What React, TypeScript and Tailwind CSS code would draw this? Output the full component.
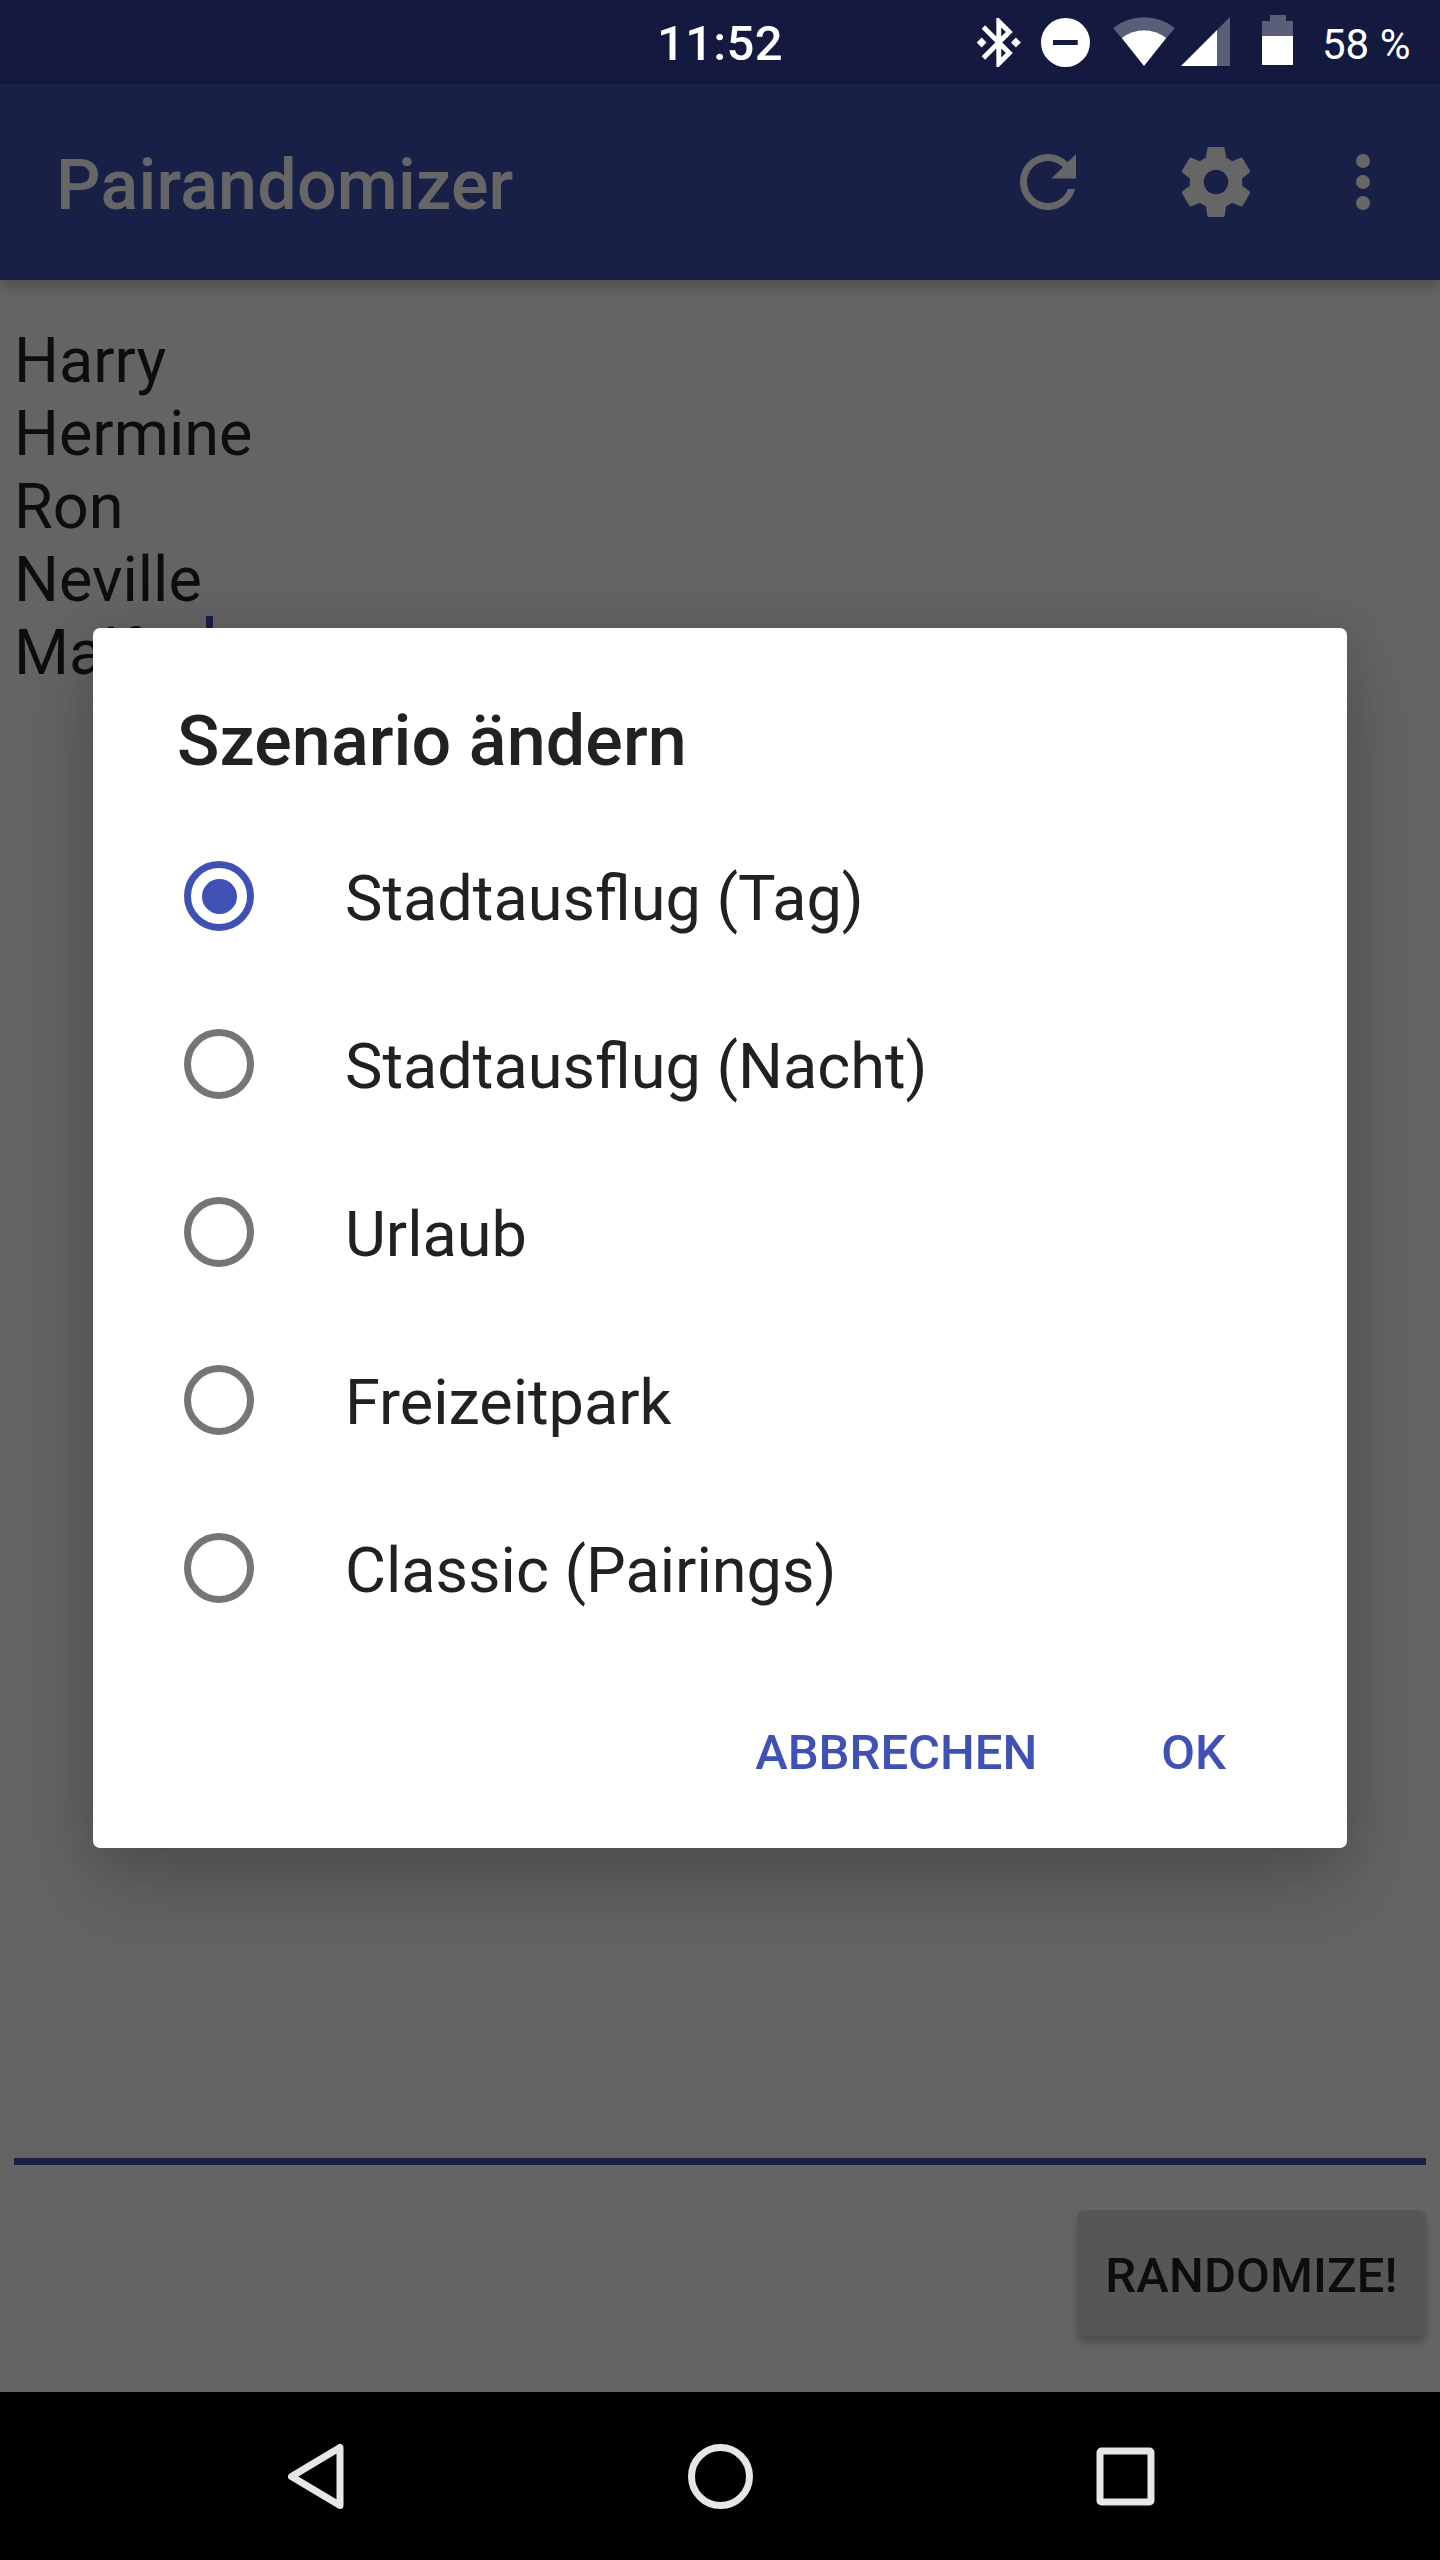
import { useState } from "react";

const names = ["Harry", "Hermine", "Ron", "Neville"];
const scenarios = [
  "Stadtausflug (Tag)",
  "Stadtausflug (Nacht)",
  "Urlaub",
  "Freizeitpark",
  "Classic (Pairings)",
];

function StatusIcons() {
  return (
    <svg width="330" height="84" viewBox="969 0 330 84" fill="#fff" className="shrink-0">
      <path
        transform="translate(969.4 13.1) scale(2.45)"
        d="M7 12l-2-2-2 2 2 2 2-2zm10.71-4.29L12 2h-1v7.59L6.41 5 5 6.41 10.59 12 5 17.59 6.41 19 11 14.41V22h1l5.71-5.71-4.3-4.29 4.3-4.29zM13 5.83l1.88 1.88L13 9.59V5.83zm1.88 10.46L13 18.17v-3.76l1.88 1.88zM19 10l-2 2 2 2 2-2-2-2z"
      />
      <path
        fillRule="evenodd"
        d="M1065.5 18a24.5 24.5 0 1 0 0 49a24.5 24.5 0 1 0 0-49zM1053 40h24.7v4.9H1053z"
      />
      <path opacity=".3" d="M1144 66L1121.7 38Q1132 30.2 1144 30.2T1166.3 38L1175 28Q1161 17.2 1144 17.2T1113 28L1121.7 38z" />
      <path d="M1144 66L1121.7 38Q1132 30.2 1144 30.2T1166.3 38z" />
      <path opacity=".3" d="M1217 66V30L1230 17V66z" />
      <path d="M1181 66L1217 30V66z" />
      <path opacity=".3" d="M1262 36V21h8v-6h16v6h7v15z" />
      <path d="M1262 36h31v29h-31z" />
    </svg>
  );
}

function Radio({ checked }: { checked: boolean }) {
  return (
    <span
      className={
        checked
          ? "flex size-[70px] shrink-0 items-center justify-center rounded-full border-[7px] border-[#3f51b5]"
          : "flex size-[70px] shrink-0 items-center justify-center rounded-full border-[7px] border-[#757575]"
      }
    >
      {checked && <span className="size-[35px] rounded-full bg-[#3f51b5]" />}
    </span>
  );
}

export default function App() {
  const [selected, setSelected] = useState(0);
  return (
    <div className="relative flex h-[2560px] w-[1440px] flex-col overflow-hidden bg-[#fafafa] font-['Roboto',sans-serif]">
      <div className="h-[84px] shrink-0 bg-[#303f9f]" />
      <header className="relative flex h-[196px] shrink-0 items-center bg-[#3f51b5] pr-[35px] pl-[56px] text-white shadow-[0_7px_14px_rgba(0,0,0,0.22)]">
        <h1 className="flex-1 pt-[5px] text-[70px] leading-[84px] font-medium tracking-[0.2px]">
          Pairandomizer
        </h1>
        <div className="flex items-center gap-[84px]">
          <svg width="84" height="84" viewBox="0 0 24 24" fill="currentColor">
            <path d="M17.65 6.35C16.2 4.9 14.21 4 12 4c-4.42 0-7.99 3.58-7.99 8s3.57 8 7.99 8c3.73 0 6.84-2.55 7.73-6h-2.08c-.82 2.33-3.04 4-5.65 4-3.31 0-6-2.69-6-6s2.69-6 6-6c1.66 0 3.14.69 4.22 1.78L13 11h7V4l-2.35 2.35z" />
          </svg>
          <svg width="84" height="84" viewBox="0 0 24 24" fill="currentColor">
            <path d="M19.43 12.98c.04-.32.07-.64.07-.98s-.03-.66-.07-.98l2.11-1.65c.19-.15.24-.42.12-.64l-2-3.46c-.12-.22-.39-.3-.61-.22l-2.49 1c-.52-.4-1.08-.73-1.69-.98l-.38-2.65C14.46 2.18 14.25 2 14 2h-4c-.25 0-.46.18-.49.42l-.38 2.65c-.61.25-1.17.59-1.69.98l-2.49-1c-.23-.09-.49 0-.61.22l-2 3.46c-.13.22-.07.49.12.64l2.11 1.65c-.04.32-.07.65-.07.98s.03.66.07.98l-2.11 1.65c-.19.15-.24.42-.12.64l2 3.46c.12.22.39.3.61.22l2.49-1c.52.4 1.08.73 1.69.98l.38 2.65c.03.24.24.42.49.42h4c.25 0 .46-.18.49-.42l.38-2.65c.61-.25 1.17-.59 1.69-.98l2.49 1c.23.09.49 0 .61-.22l2-3.46c.12-.22.07-.49-.12-.64l-2.11-1.65zM12 15.5c-1.93 0-3.5-1.57-3.5-3.5s1.57-3.5 3.5-3.5 3.5 1.57 3.5 3.5-1.57 3.5-3.5 3.5z" />
          </svg>
        </div>
        <svg width="84" height="84" viewBox="0 0 24 24" fill="currentColor" className="ml-[63px]">
          <circle cx="12" cy="6" r="2" />
          <circle cx="12" cy="12" r="2" />
          <circle cx="12" cy="18" r="2" />
        </svg>
      </header>

      <main className="flex flex-1 flex-col px-[14px] pt-[44px]">
        <div className="h-[1841px] border-b-[7px] border-[#3f51b5] text-[63px] leading-[73px] text-[#212121]">
          {names.map((name) => (
            <p key={name}>{name}</p>
          ))}
          <div className="flex">
            <p>Malfoy</p>
            <span className="h-[73px] w-[7px] bg-[#3f51b5]" />
          </div>
        </div>
        <div className="flex pt-[45px]">
          <button className="ml-auto flex h-[126px] w-[349px] items-center justify-center rounded-[7px] bg-[#d6d7d7] pt-[5px] text-[49px] font-medium tracking-[0.15px] text-[#212121] shadow-[0_7px_7px_rgba(0,0,0,0.22)]">
            RANDOMIZE!
          </button>
        </div>
      </main>

      <div className="h-[168px] shrink-0" />

      {/* Scrim with the modal, status content and system navigation above it */}
      <div className="absolute inset-0 flex flex-col bg-black/60">
        <div className="flex h-[84px] shrink-0 items-center pl-[657px] text-white">
          <span className="w-[312px] pt-[4px] text-[49px] font-medium tracking-[0.3px]">11:52</span>
          <StatusIcons />
          <span className="pt-[4px] pl-[23px] text-[42px] whitespace-nowrap">58 %</span>
        </div>

        <div className="flex flex-1 justify-center pt-[544px]">
          <section className="flex h-[1220px] w-[1254px] flex-col rounded-[7px] bg-white text-[#212121] shadow-[0_40px_80px_rgba(0,0,0,0.2),0_0_44px_rgba(0,0,0,0.1)]">
            <h2 className="pt-[71px] pl-[84px] text-[70px] leading-[84px] font-medium tracking-[0.1px]">
              Szenario ändern
            </h2>
            <div className="pt-[29px]">
              {scenarios.map((label, i) => (
                <button
                  key={label}
                  onClick={() => setSelected(i)}
                  className="flex h-[168px] w-full items-center pl-[91px] text-left"
                >
                  <Radio checked={selected === i} />
                  <span className="pt-[6px] pl-[91px] text-[63px] leading-[74px]">{label}</span>
                </button>
              ))}
            </div>
            <div className="flex justify-end gap-[124px] pt-[71px] pr-[121px] text-[49px] leading-[60px] font-medium text-[#3f51b5]">
              <button>ABBRECHEN</button>
              <button>OK</button>
            </div>
          </section>
        </div>

        <nav className="flex h-[168px] shrink-0 items-center justify-center gap-[321px] bg-black">
          <svg width="84" height="84" viewBox="0 0 84 84" fill="none" stroke="#e6e6e6" strokeWidth="7" strokeLinejoin="round">
            <path d="M67 13.5V71.5L18.5 42.5z" />
          </svg>
          <svg width="84" height="84" viewBox="0 0 84 84" fill="none" stroke="#e6e6e6" strokeWidth="7">
            <circle cx="42.5" cy="42.5" r="29" />
          </svg>
          <svg width="84" height="84" viewBox="0 0 84 84" fill="none" stroke="#e6e6e6" strokeWidth="7" strokeLinejoin="round">
            <rect x="17" y="17" width="51" height="51" rx="1.5" />
          </svg>
        </nav>
      </div>
    </div>
  );
}
